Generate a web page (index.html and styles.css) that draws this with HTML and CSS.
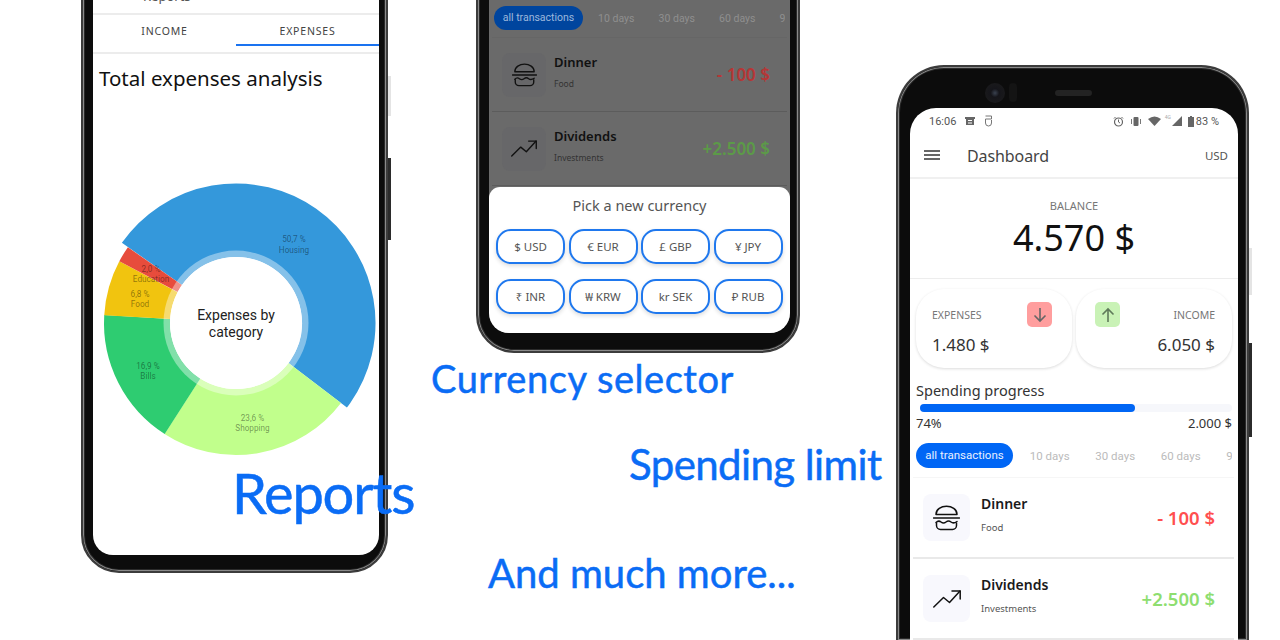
FILE: index.html
```html
<!DOCTYPE html>
<html lang="en">
<head>
  <meta charset="UTF-8">
  <title>Expense tracker screenshots</title>
  <link rel="stylesheet" href="styles.css">
</head>
<body>
<svg class="defs" width="0" height="0">
  <symbol id="burger" viewBox="0 0 27 26">
    <g fill="none" stroke="currentColor" stroke-width="1.5" stroke-linecap="round" stroke-linejoin="round">
      <path d="M3 9.5C3 -1.5 24 -1.5 24 9.5Z"/>
      <path d="M.5 13H26.5"/>
      <path d="M3 17.5q2.5 -2.5 5 -.5t5 0t5 0t6 -.5"/>
      <path d="M3.500 18V20.500a4 4 0 0 0 4 4H19.500a4 4 0 0 0 4 -4V18"/>
    </g>
  </symbol>
  <symbol id="trend" viewBox="0 0 28 18">
    <g fill="none" stroke="currentColor" stroke-width="1.500" stroke-linecap="round" stroke-linejoin="round">
      <path d="M.8 17L10.500 7.500L16.500 12.500L27 1"/>
      <path d="M19 1H27.200V9"/>
    </g>
  </symbol>
</svg>

<!-- reports phone -->
<div class="phone phone-reports">
  <div class="btn-light"></div>
  <div class="btn-dark"></div>
  <div class="screen">
    <div class="bar-reports">Reports</div>
    <div class="tabs">
      <div class="tab">INCOME</div>
      <div class="tab active">EXPENSES</div>
    </div>
    <h2 class="report-title">Total expenses analysis</h2>
    <svg class="donut" width="286" height="286" viewBox="0 0 286 286">
      <g fill="none" transform="rotate(-90 143 143)">
        <circle class="slice" cx="143" cy="143" r="102.750" stroke="#3498db" stroke-width="73.500" pathLength="360" stroke-dasharray="182.300 177.700" transform="rotate(305.100 143 143)"/>
        <circle class="slice" cx="143" cy="143" r="99" stroke="#c1ff8c" stroke-width="66" pathLength="360" stroke-dasharray="85.400 274.600" transform="rotate(127.300 143 143)"/>
        <circle class="slice" cx="143" cy="143" r="99" stroke="#2ecc71" stroke-width="66" pathLength="360" stroke-dasharray="60.700 299.300" transform="rotate(212.700 143 143)"/>
        <circle class="slice" cx="143" cy="143" r="99" stroke="#f1c40f" stroke-width="66" pathLength="360" stroke-dasharray="24.500 335.500" transform="rotate(273.400 143 143)"/>
        <circle class="slice" cx="143" cy="143" r="99" stroke="#e74c3c" stroke-width="66" pathLength="360" stroke-dasharray="7.200 352.800" transform="rotate(297.900 143 143)"/>
      </g>
      <circle cx="143" cy="143" r="72.500" fill="#fff" fill-opacity=".4"/>
      <circle cx="143" cy="143" r="66" fill="#fff"/>
      <g class="slice-label">
        <text x="201" y="62">50,7 %</text><text x="201" y="73">Housing</text>
        <text x="58" y="92">2,0 %</text><text x="58" y="102">Education</text>
        <text x="47" y="117">6,8 %</text><text x="47" y="127">Food</text>
        <text x="55" y="189">16,9 %</text><text x="55" y="199">Bills</text>
        <text x="159.500" y="241">23,6 %</text><text x="159.500" y="251">Shopping</text>
      </g>
      <g class="donut-center">
        <text x="143" y="140">Expenses by</text>
        <text x="143" y="157">category</text>
      </g>
    </svg>
  </div>
</div>

<!-- currency selector phone -->
<div class="phone phone-currency">
  <div class="screen dim">
    <div class="chips">
      <span class="chip on">all transactions</span>
      <span class="chip">10 days</span>
      <span class="chip">30 days</span>
      <span class="chip">60 days</span>
      <span class="chip">90 days</span>
    </div>
    <div class="row">
      <div class="tile"><svg class="ico-burger"><use href="#burger"/></svg></div>
      <div class="row-text"><b>Dinner</b><small>Food</small></div>
      <div class="amount neg">- 100 $</div>
    </div>
    <div class="row">
      <div class="tile"><svg class="ico-trend"><use href="#trend"/></svg></div>
      <div class="row-text"><b>Dividends</b><small>Investments</small></div>
      <div class="amount pos">+2.500 $</div>
    </div>
    <div class="sheet">
      <div class="sheet-title">Pick a new currency</div>
      <div class="currencies">
        <span class="cur">$ USD</span>
        <span class="cur">€ EUR</span>
        <span class="cur">£ GBP</span>
        <span class="cur">¥ JPY</span>
        <span class="cur">₹ INR</span>
        <span class="cur">₩ KRW</span>
        <span class="cur">kr SEK</span>
        <span class="cur">₽ RUB</span>
      </div>
    </div>
  </div>
</div>

<!-- dashboard phone -->
<div class="phone phone-dash">
  <div class="btn-light"></div>
  <div class="btn-dark"></div>
  <div class="camera"></div>
  <div class="sensor"></div>
  <div class="speaker"></div>
  <div class="screen">
    <div class="status">
      <span>16:06</span>
      <svg class="st st-book" width="12" height="10" viewBox="0 0 12 10"><path d="M1 1H11V3H10V9H2V3H1ZM4 4V5H8V4ZM4 6.500V7.500H8V6.500Z" fill="#666" fill-rule="evenodd"/></svg>
      <svg class="st st-sim" width="9" height="12" viewBox="0 0 9 12"><path d="M1.500 1H7.500V4H1.500V8a3 3 0 0 0 6 0V5" fill="none" stroke="#777" stroke-width="1"/></svg>
      <span class="status-gap"></span>
      <svg class="st" width="11" height="11" viewBox="0 0 11 11"><circle cx="5.500" cy="6" r="4" fill="none" stroke="#666" stroke-width="1.200"/><path d="M5.500 3.500V6L7 7M1 2.500L2.500 1M10 2.500L8.500 1" fill="none" stroke="#666"/></svg>
      <svg class="st" width="12" height="9" viewBox="0 0 12 9"><rect x="3.500" y="0" width="5" height="9" rx="1" fill="#666"/><path d="M1.500 2V7M10.500 2V7" stroke="#777"/></svg>
      <svg class="st" width="13" height="10" viewBox="0 0 13 10"><path d="M0 3Q6.500 -2 13 3L6.500 10Z" fill="#666"/></svg>
      <span class="net">4G</span>
      <svg class="st" width="10" height="10" viewBox="0 0 10 10"><path d="M10 0V10H0Z" fill="#666"/></svg>
      <svg class="st" width="6" height="11" viewBox="0 0 6 11"><path d="M2 0H4V1H6V11H0V1H2Z" fill="#666"/></svg>
      <span class="pct">83 %</span>
    </div>
    <div class="appbar">
      <div class="burger-menu"><i></i><i></i><i></i></div>
      <div class="appbar-title">Dashboard</div>
      <div class="appbar-cur">USD</div>
    </div>
    <div class="balance">
      <div class="balance-label">BALANCE</div>
      <div class="balance-value">4.570 $</div>
    </div>
    <div class="cards">
      <div class="card">
        <div class="card-top">
          <span class="card-label">EXPENSES</span>
          <span class="arrow-tile red"><svg width="16" height="16" viewBox="0 0 16 16"><path d="M8 1V14M2.500 8.500L8 14L13.500 8.500" fill="none" stroke="#666" stroke-width="1.600"/></svg></span>
        </div>
        <div class="card-value">1.480 $</div>
      </div>
      <div class="card right">
        <div class="card-top">
          <span class="arrow-tile green"><svg width="16" height="16" viewBox="0 0 16 16"><path d="M8 15V2M2.500 7.500L8 2L13.500 7.500" fill="none" stroke="#5f7a5a" stroke-width="1.600"/></svg></span>
          <span class="card-label">INCOME</span>
        </div>
        <div class="card-value">6.050 $</div>
      </div>
    </div>
    <div class="spending">
      <div class="spending-title">Spending progress</div>
      <div class="track"><div class="fill" style="width:69%"></div></div>
      <div class="spending-foot"><span>74%</span><span>2.000 $</span></div>
    </div>
    <div class="chips">
      <span class="chip on">all transactions</span>
      <span class="chip">10 days</span>
      <span class="chip">30 days</span>
      <span class="chip">60 days</span>
      <span class="chip">90 days</span>
    </div>
    <div class="row">
      <div class="tile"><svg class="ico-burger"><use href="#burger"/></svg></div>
      <div class="row-text"><b>Dinner</b><small>Food</small></div>
      <div class="amount neg">- 100 $</div>
    </div>
    <div class="row">
      <div class="tile"><svg class="ico-trend"><use href="#trend"/></svg></div>
      <div class="row-text"><b>Dividends</b><small>Investments</small></div>
      <div class="amount pos">+2.500 $</div>
    </div>
  </div>
</div>

<div class="note note-reports">Reports</div>
<div class="note note-currency">Currency selector</div>
<div class="note note-limit">Spending limit</div>
<div class="note note-more">And much more...</div>
</body>
</html>
```

FILE: styles.css
```css
* {
  box-sizing: border-box;
  margin: 0;
  padding: 0;
}

html, body {
  width: 1280px;
  height: 640px;
  overflow: hidden;
  background: #fff;
}

body {
  position: relative;
  font-family: "Noto Sans", "Liberation Sans", sans-serif;
  color: #222;
}

.defs {
  position: absolute;
}

/* phone body */
.phone {
  position: absolute;
  background: #0c0c0c;
  border: 2px solid #3c3c3c;
  box-shadow: inset 0 0 0 1px #8a8a8a, inset 0 0 0 2px #2a2a2a;
}

.screen {
  position: relative;
  height: 100%;
  overflow: hidden;
  background: #fff;
}

.btn-light, .btn-dark {
  position: absolute;
  width: 3px;
}

.btn-light {
  background: #e4e4e4;
}

.btn-dark {
  background: #2b2b2b;
}

.phone-reports {
  left: 81px;
  top: -60px;
  width: 307px;
  height: 633px;
  padding: 18px 7px 16px 10px;
  border-radius: 44px 44px 38px 38px;
}

.phone-reports .screen {
  border-radius: 0 0 20px 20px;
}

.phone-reports .btn-light {
  left: 305px;
  top: 134px;
  height: 40px;
}

.phone-reports .btn-dark {
  left: 305px;
  top: 216px;
  height: 82px;
}

.bar-reports {
  height: 55px;
  padding-top: 27px;
  border-bottom: 2px solid #ececec;
  padding-left: 50px;
  font-size: 13px;
  color: #555;
}

.tabs {
  display: flex;
  height: 39px;
  padding-bottom: 6px;
  border-bottom: 2px solid #ececec;
}

.tab {
  flex: 1;
  padding-top: 9px;
  text-align: center;
  font-size: 10.5px;
  letter-spacing: .8px;
  color: #444;
}

.tab.active {
  border-bottom: 2px solid #1a73f0;
}

.report-title {
  margin: 9px 0 0 6px;
  font-size: 20.5px;
  line-height: 30px;
  font-weight: 400;
  color: #111;
}

.donut {
  display: block;
  margin-top: 87px;
  overflow: visible;
}

.slice-label text {
  font-family: Roboto, sans-serif;
  font-size: 8.2px;
  text-anchor: middle;
  fill: #000;
  fill-opacity: .42;
}

.donut-center text {
  font-family: Roboto, sans-serif;
  font-size: 14px;
  text-anchor: middle;
  fill: #222;
}

/* chips + rows, dashboard sizes */
.chips {
  display: flex;
  align-items: center;
  height: 25px;
  margin: 11px 6px 0;
  overflow: hidden;
  font-family: Roboto, sans-serif;
  font-size: 11.5px;
  color: #bbb;
}

.chip {
  flex: none;
  width: 65.500px;
  text-align: center;
}

.chip.on {
  width: 97px;
  height: 25px;
  margin-right: 4px;
  line-height: 25px;
  border-radius: 13px;
  color: #e8f0ff;
  background: #0066f5;
}

.row {
  display: flex;
  align-items: center;
  height: 81px;
  margin: 0 4px 0 3px;
  padding: 0 19px 0 10px;
  border-bottom: 2px solid #e9e9e9;
}

.chips + .row {
  height: 82px;
  margin-top: 9px;
  border-top: 1px solid #f6f6f6;
}

.tile {
  flex: none;
  display: flex;
  align-items: center;
  justify-content: center;
  width: 47px;
  height: 47px;
  border-radius: 8px;
  color: #111;
  background: #f8f8fd;
}

.ico-burger {
  width: 27px;
  height: 26px;
}

.ico-trend {
  width: 28px;
  height: 18px;
}

.row-text {
  flex: 1;
  margin-left: 11px;
  padding-bottom: 6px;
  display: flex;
  flex-direction: column;
}

.row-text b {
  font-size: 14px;
  line-height: 20px;
  font-weight: 600;
  color: #1a1a1a;
}

.row-text small {
  margin-top: 7px;
  font-size: 9.5px;
  line-height: 14px;
  color: #555;
}

.amount {
  font-size: 18.5px;
  font-weight: 600;
}

.neg {
  color: #ff4f4f;
}

.pos {
  color: #8ede70;
}

/* currency phone */
.phone-currency {
  left: 476px;
  top: -60px;
  width: 324px;
  height: 413px;
  padding: 18px 8px 18px 11px;
  border-radius: 44px 44px 38px 38px;
}

.dim {
  background: #6a6a6a;
  border-radius: 0 0 20px 20px;
}

.dim .chips {
  height: 24px;
  margin: 46px 5px 0 5px;
  font-size: 10.5px;
  color: #8f8f8f;
}

.dim .chip {
  width: 60.500px;
}

.dim .chip.on {
  width: 89px;
  height: 24px;
  margin-right: 3px;
  line-height: 24px;
  color: #9db8dc;
  background: #00459e;
}

.dim .row {
  height: 74px;
  margin: 0 3px;
  padding: 0 17px 0 10px;
  border-bottom: 1px solid #5c5c5c;
}

.dim .chips + .row {
  height: 75px;
  margin-top: 7px;
  border-top: 1px solid #666;
}

.dim .tile {
  width: 44px;
  height: 44px;
  background: #676769;
}

.dim .ico-burger {
  width: 25px;
  height: 24px;
}

.dim .ico-trend {
  width: 26px;
  height: 17px;
}

.dim .row-text {
  margin-left: 8px;
  padding-bottom: 5px;
}

.dim .row-text b {
  font-size: 13px;
  line-height: 18px;
  color: #111;
}

.dim .row-text small {
  margin-top: 6px;
  font-size: 8.500px;
  color: #333;
}

.dim .amount {
  font-size: 17px;
}

.dim .neg {
  color: #b63636;
}

.dim .pos {
  color: #5c9a48;
}

.sheet {
  position: absolute;
  left: 0;
  right: 0;
  bottom: 0;
  height: 146px;
  padding: 8px 7px 0;
  border-radius: 11px 11px 0 0;
  background: #fff;
}

.sheet-title {
  height: 20px;
  line-height: 20px;
  text-align: center;
  font-size: 14.500px;
  color: #555;
}

.currencies {
  display: grid;
  grid-template-columns: repeat(4, 69px);
  grid-auto-rows: 34.500px;
  gap: 15.500px 3.500px;
  margin-top: 14px;
}

.cur {
  display: flex;
  align-items: center;
  justify-content: center;
  border: 2px solid #1f78ee;
  border-radius: 15px;
  font-size: 11.500px;
  color: #555;
  background: #fff;
  box-shadow: 0 2px 4px rgba(0, 0, 0, .14);
}

/* dashboard phone */
.phone-dash {
  left: 896px;
  top: 65px;
  width: 353px;
  height: 575px;
  padding: 41px 9px 0 12px;
  border-radius: 48px 48px 0 0;
  border-bottom: 0;
}

.phone-dash .screen {
  border-radius: 26px 26px 0 0;
}

.phone-dash .btn-light {
  left: 351px;
  top: 181px;
  height: 47px;
}

.phone-dash .btn-dark {
  left: 351px;
  top: 276px;
  height: 94px;
}

.camera {
  position: absolute;
  left: 87px;
  top: 16px;
  width: 20px;
  height: 20px;
  border-radius: 50%;
  background: radial-gradient(circle, #3a4250 0, #15151a 30%, #1c1c1c 100%);
}

.sensor {
  position: absolute;
  left: 111px;
  top: 16px;
  width: 8px;
  height: 19px;
  border-radius: 4px;
  background: #141414;
}

.speaker {
  position: absolute;
  left: 157px;
  top: 23px;
  width: 37px;
  height: 6px;
  border-radius: 3px;
  background: #232323;
}

.status {
  display: flex;
  align-items: center;
  gap: 6px;
  height: 26px;
  padding: 0 19px 0 19px;
  font-family: Roboto, sans-serif;
  font-size: 11px;
  color: #555;
}

.st-book {
  margin-left: 2px;
}

.st-sim {
  margin-left: 2px;
}

.status-gap {
  flex: 1;
}

.net {
  margin: -8px -5px 0 -2px;
  font-size: 5px;
  color: #aaa;
}

.pct {
  margin-left: -4px;
}

.appbar {
  display: flex;
  align-items: center;
  height: 45px;
  padding: 0 10px 0 14px;
  border-bottom: 2px solid #f0f0f0;
}

.burger-menu {
  width: 16px;
}

.burger-menu i {
  display: block;
  height: 2px;
  margin-bottom: 2px;
  background: #666;
}

.appbar-title {
  flex: 1;
  margin-left: 27px;
  font-size: 16px;
  letter-spacing: -.1px;
  color: #444;
}

.appbar-cur {
  font-size: 11.500px;
  color: #555;
}

.balance {
  height: 100px;
  padding-top: 18px;
  text-align: center;
  border-bottom: 1px solid #ededed;
}

.balance-label {
  font-size: 11px;
  line-height: 18px;
  color: #777;
}

.balance-value {
  font-size: 36px;
  line-height: 46px;
  color: #111;
}

.cards {
  display: flex;
  gap: 4px;
  margin: 10px 6px 0 6px;
}

.card {
  flex: 1;
  height: 79px;
  padding: 13px 20px 0 16px;
  border-radius: 28px;
  background: #fff;
  box-shadow: 0 1px 3px rgba(0, 0, 0, .14);
}

.card.right {
  padding: 13px 17px 0 19px;
  text-align: right;
}

.card-top {
  display: flex;
  align-items: center;
  justify-content: space-between;
}

.card-label {
  font-size: 10.500px;
  color: #777;
}

.arrow-tile {
  display: flex;
  align-items: center;
  justify-content: center;
  width: 25px;
  height: 25px;
  border-radius: 5px;
}

.red {
  background: #ff9e9e;
}

.green {
  background: #c9f2b6;
}

.card-value {
  margin-top: 6px;
  font-size: 17px;
  line-height: 24px;
  color: #333;
}

.spending {
  margin: 12px 6px 0;
}

.spending-title {
  font-size: 14.500px;
  line-height: 20px;
  color: #333;
}

.track {
  height: 8px;
  margin: 4px 0 0 4px;
  border-radius: 4px;
  background: #f6f7fb;
}

.fill {
  height: 8px;
  border-radius: 4px;
  background: #0066f5;
}

.spending-foot {
  display: flex;
  justify-content: space-between;
  margin-top: 2px;
  font-size: 13px;
  line-height: 18px;
  color: #333;
}

/* captions */
.note {
  position: absolute;
  font-family: Lato, sans-serif;
  line-height: 1;
  white-space: nowrap;
  color: #0a6cf5;
  -webkit-text-stroke: .5px #0a6cf5;
}

.note-reports {
  left: 232px;
  top: 465px;
  font-size: 56px;
  letter-spacing: -1.200px;
}

.note-currency {
  left: 431px;
  top: 359px;
  font-size: 38px;
  letter-spacing: .550px;
}

.note-limit {
  left: 629px;
  top: 443px;
  font-size: 42px;
  letter-spacing: -.600px;
}

.note-more {
  left: 488px;
  top: 553px;
  font-size: 40px;
  letter-spacing: 0;
}
```
